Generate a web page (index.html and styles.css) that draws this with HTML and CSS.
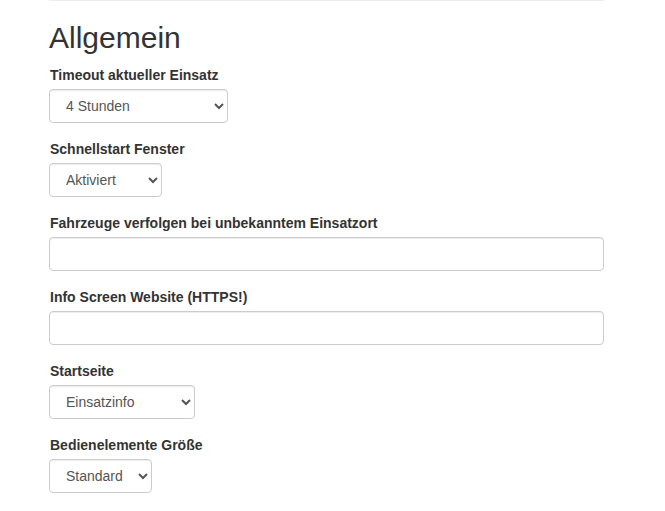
FILE: index.html
```html
<!DOCTYPE html>
<html lang="de">
<head>
<meta charset="utf-8">
<title>Allgemein</title>
<link rel="stylesheet" href="styles.css">
</head>
<body>
<div class="page">
  <hr class="divider">
  <h2 class="title">Allgemein</h2>
  <div class="form-group">
    <label class="label">Timeout aktueller Einsatz</label>
    <select class="control select w-178"><option>4 Stunden</option></select>
  </div>
  <div class="form-group">
    <label class="label">Schnellstart Fenster</label>
    <select class="control select w-112"><option>Aktiviert</option></select>
  </div>
  <div class="form-group">
    <label class="label">Fahrzeuge verfolgen bei unbekanntem Einsatzort</label>
    <input class="control input" type="text">
  </div>
  <div class="form-group">
    <label class="label">Info Screen Website (HTTPS!)</label>
    <input class="control input" type="text">
  </div>
  <div class="form-group">
    <label class="label">Startseite</label>
    <select class="control select w-145"><option>Einsatzinfo</option></select>
  </div>
  <div class="form-group">
    <label class="label">Bedienelemente Größe</label>
    <select class="control select w-102"><option>Standard</option></select>
  </div>
</div>
</body>
</html>
```
FILE: styles.css
```css
* { box-sizing: border-box; }
html, body {
  margin: 0;
  padding: 0;
  background: #fff;
}
body {
  font-family: "Liberation Sans", Arial, sans-serif;
  font-size: 14px;
  line-height: 1.42857;
  color: #333;
}
.page {
  width: 555px;
  margin-left: 49px;
}
.divider {
  margin: 0 0 20px 0;
  border: 0;
  border-top: 1px solid #eee;
  height: 0;
}
.title {
  font-size: 30px;
  font-weight: 500;
  line-height: 1.1;
  margin: 20px 0 10px;
  color: #333;
}
.form-group {
  margin-bottom: 15px;
}
.label {
  display: block;
  max-width: 100%;
  padding: 1px 0 0 1px;
  margin-bottom: 4px;
  line-height: 20px;
  font-weight: 700;
}
.control {
  display: block;
  height: 34px;
  padding: 6px 12px;
  font-family: inherit;
  font-size: 14px;
  line-height: 1.42857;
  color: #555;
  background-color: #fff;
  border: 1px solid #ccc;
  border-radius: 4px;
  box-shadow: inset 0 1px 1px rgba(0,0,0,.075);
}
.input { width: 100%; }
.w-178 { width: 179px; }
.w-112 { width: 113px; }
.w-145 { width: 146px; }
.w-102 { width: 103px; }
```
